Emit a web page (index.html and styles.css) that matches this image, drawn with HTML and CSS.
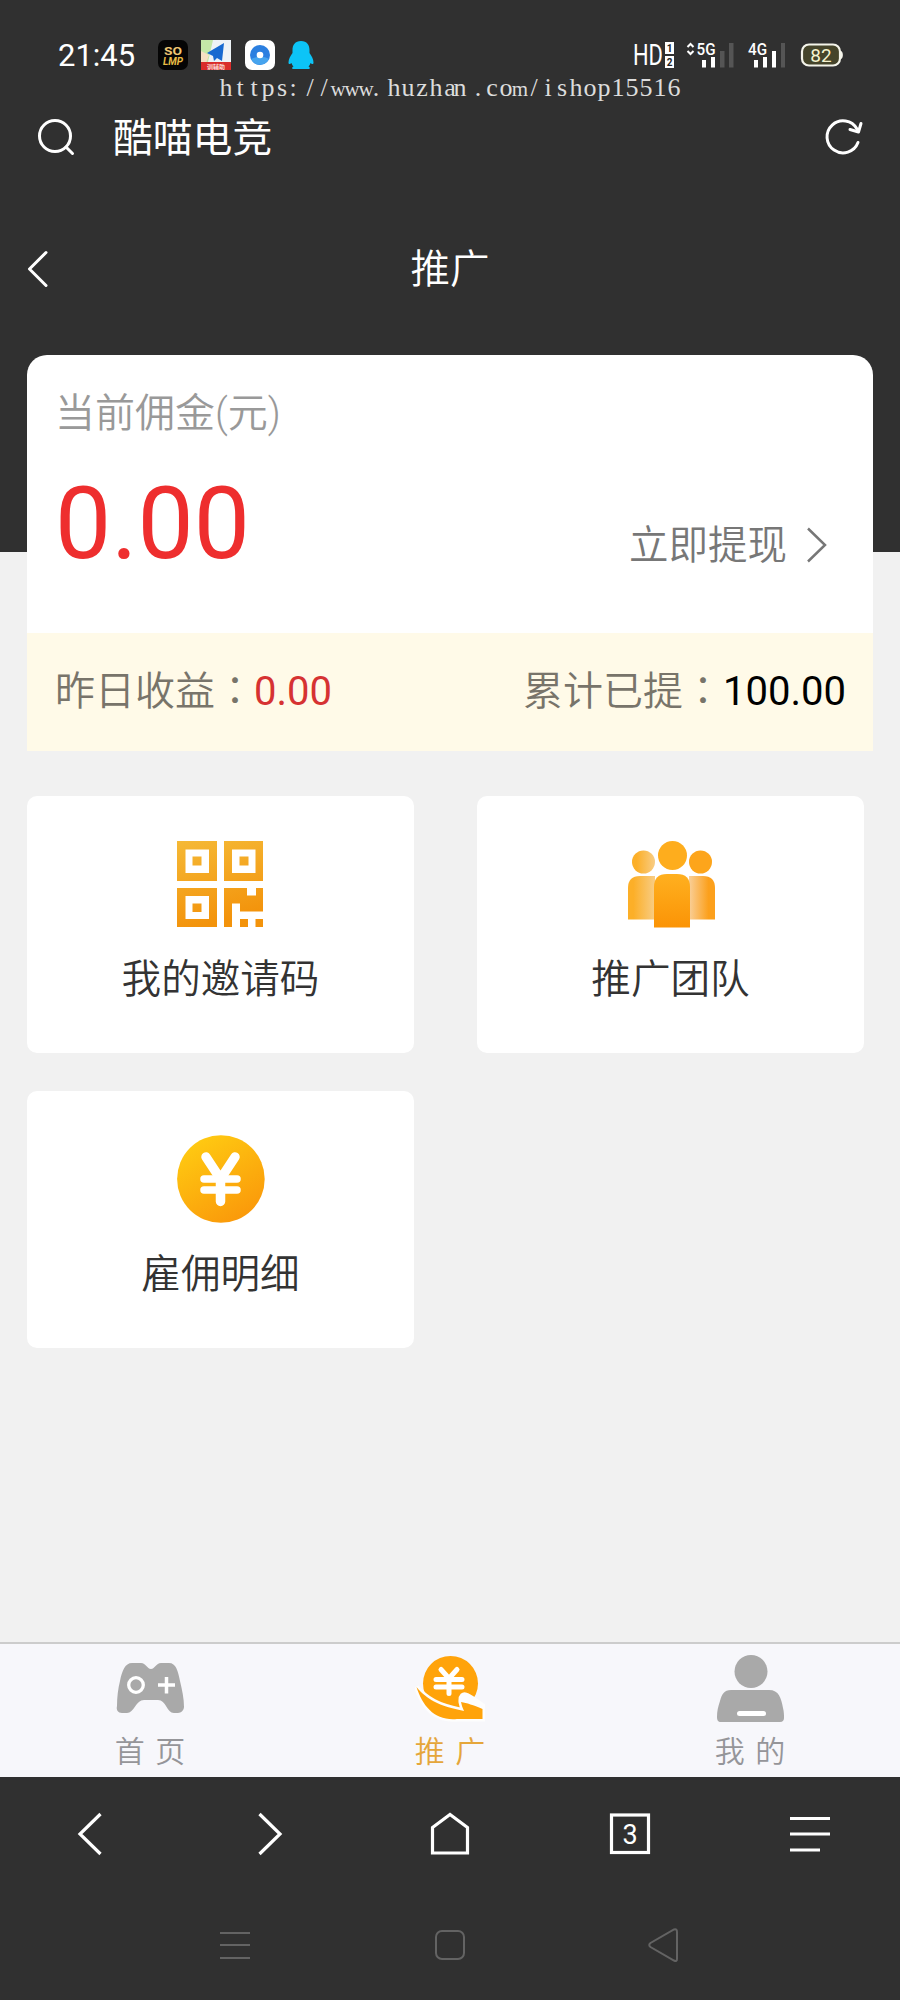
FILE: index.html
```html
<!DOCTYPE html>
<html lang="zh-CN">
<head>
<meta charset="utf-8">
<title>推广</title>
<link rel="stylesheet" href="styles.css">
</head>
<body>
<div class="phone">
  <header class="top">
    <div class="status">
      <span class="clock">21:45</span>
      <div class="apps">
        <svg class="app" width="30" height="30" viewBox="0 0 30 30">
          <rect width="30" height="30" rx="7" fill="#050505"/>
          <text x="15" y="15" class="app-word" textLength="18" lengthAdjust="spacingAndGlyphs" fill="#f0c774">SO</text>
          <text x="15" y="24.500" class="app-word app-word-slant" textLength="20" lengthAdjust="spacingAndGlyphs" fill="#e9bd45">LMP</text>
        </svg>
        <svg class="app" width="30" height="30" viewBox="0 0 30 30">
          <rect width="30" height="30" fill="#eef3f6"/>
          <path d="M0 0h12L7 22H0z" fill="#c4e8a8"/>
          <path d="M0 11l8 4-3 8H0z" fill="#f5dfc4"/>
          <path d="M23 3L6 13l6 3 1 5 3-3 5 3z" fill="#1769d0"/>
          <rect y="22" width="30" height="8" fill="#d92d2b"/>
          <text x="15" y="28.500" class="app-tag">训辅助</text>
        </svg>
        <svg class="app" width="30" height="30" viewBox="0 0 30 30">
          <rect width="30" height="30" rx="7" fill="#fff"/>
          <circle cx="15" cy="15" r="10" fill="#2b7fe0"/>
          <path d="M6 19a10 10 0 0 0 18 0c-5-3-12-3-18 0z" fill="#46a4ee"/>
          <circle cx="15" cy="15" r="3.300" fill="#fff"/>
        </svg>
        <svg class="app" width="26" height="30" viewBox="0 0 26 30">
          <path d="M13 1C7 1 4.500 5 4.500 10v3C2.500 16 .5 19 .5 22.500c0 2 1.500 2 3 .5.500 1.500 1 2.500 2 3.500-1.500.500-2 2.500 0 2.500h15c2 0 1.500-2 0-2.500 1-1 1.500-2 2-3.500 1.500 1.500 3 1.500 3-.5 0-3.500-2-6.500-4-9.500v-3C21.500 5 19 1 13 1z" fill="#0cc4f7"/>
        </svg>
      </div>
      <svg class="signals" width="220" height="36" viewBox="625 37 220 36">
        <text x="633" y="65" class="hd" textLength="30" lengthAdjust="spacingAndGlyphs">HD</text>
        <rect x="665" y="42" width="9" height="12" fill="#fff"/>
        <rect x="665" y="56" width="9" height="12" fill="#fff"/>
        <text x="669.500" y="52" class="sim">1</text>
        <text x="669.500" y="66" class="sim">2</text>
        <path d="M687.500 47l3-3 3 3M687.500 51l3 3 3-3" fill="none" stroke="#fff" stroke-width="2"/>
        <text x="696.500" y="55" class="net" textLength="19" lengthAdjust="spacingAndGlyphs">5G</text>
        <path d="M702 60h4v7.500h-4zM711 57h4v10.500h-4z" fill="#fff"/>
        <path d="M720 51h4.500v16.500H720zM729 43h4.500v24.500H729z" fill="#555"/>
        <text x="748" y="55" class="net" textLength="19" lengthAdjust="spacingAndGlyphs">4G</text>
        <path d="M754 60h4v7.500h-4zM763 57h4v10.500h-4zM772 51h4v16.500h-4z" fill="#fff"/>
        <path d="M781 43h4v24.500h-4z" fill="#555"/>
        <rect x="802" y="44.500" width="38" height="21" rx="7" fill="#45442a" stroke="#f4f4ea" stroke-width="2.200"/>
        <path d="M841 51c2.500 1 2.500 7 0 8z" fill="#f4f4ea"/>
        <text x="821" y="61.500" class="battery">82</text>
      </svg>
    </div>
    <svg class="watermark" width="464" height="28" viewBox="0 0 464 28">
      <text y="22" x="7 21 35 49 63 74 91 105 119 133 147 157 175 189 203 217 231 241 259 273 287 301 315 329 343 357 371 385 399 413 427 441 455">https://<tspan class="wide">www</tspan>.huzhan.co<tspan class="wide">m</tspan>/ishop15516</text>
    </svg>
    <div class="address">
      <svg class="search" width="40" height="40" viewBox="0 0 40 40"><circle cx="19" cy="19" r="15.500"/><path d="M30 30l6.500 6.500"/></svg>
      <span class="site">酷喵电竞</span>
      <svg class="refresh" width="40" height="40" viewBox="0 0 40 40"><path d="M34 25.500A16 16 0 1 1 33 12"/><path d="M26 12.500l8.500 2.500 2.500-8.500"/></svg>
    </div>
    <div class="titlebar">
      <svg class="back" width="24" height="40" viewBox="0 0 24 40"><path d="M21 3.500L4.500 20 21 36.500"/></svg>
      <h1 class="title">推广</h1>
    </div>
  </header>

  <main class="content">
    <section class="wallet">
      <div class="wallet-main">
        <div class="caption">当前佣金(元)</div>
        <div class="balance">
          <span class="amount">0.00</span>
          <a class="withdraw"><span>立即提现</span><svg width="24" height="40" viewBox="0 0 24 40"><path d="M3 3.500L20 20 3 36.500"/></svg></a>
        </div>
      </div>
      <div class="wallet-sub">
        <div>昨日收益<span class="colon" lang="zh-TW">：</span><b class="red">0.00</b></div>
        <div>累计已提<span class="colon" lang="zh-TW">：</span><b class="black">100.00</b></div>
      </div>
    </section>

    <section class="grid">
      <a class="tile">
        <svg width="88" height="88" viewBox="0 0 88 88">
          <defs><linearGradient id="qr" x1="0" y1="0" x2=".25" y2="1"><stop offset="0" stop-color="#f5b936"/><stop offset="1" stop-color="#f3930b"/></linearGradient></defs>
          <path fill="url(#qr)" fill-rule="evenodd" d="M0 1h40v40H0zM8.500 9.500v23.500h23.500V9.500zM15.500 16.500h9v9h-9zM47 1h39v40H47zM55 9.500v23.500h23.500V9.500zM62.500 16.500h9v9h-9zM0 48h40v39H0zM8.500 56v23h23.500V56zM15.500 63.500h9v8.500h-9zM47 48h23v7.500h9V48h7v23.500H63v-8h-8V87h-8zM63 79h8v8h-8zM78.500 79H86v8h-7.500z"/>
        </svg>
        <span>我的邀请码</span>
      </a>
      <a class="tile">
        <svg width="88" height="88" viewBox="0 0 88 88">
          <defs>
            <linearGradient id="mid" x1="0" y1="0" x2="0" y2="1"><stop offset="0" stop-color="#ffb01f"/><stop offset="1" stop-color="#fb9406"/></linearGradient>
            <linearGradient id="left" x1="0" y1="0" x2="1" y2="0"><stop offset=".2" stop-color="#fcaf28"/><stop offset="1" stop-color="#f8cd85"/></linearGradient>
            <linearGradient id="right" x1="1" y1="0" x2="0" y2="0"><stop offset=".25" stop-color="#fca01c"/><stop offset="1" stop-color="#f9cf98"/></linearGradient>
          </defs>
          <circle cx="16.500" cy="22" r="11.500" fill="url(#left)"/>
          <circle cx="73.500" cy="22" r="11.500" fill="#fda51b"/>
          <path d="M1 79.500V48q0-12 12-12h15v43.500z" fill="url(#left)"/>
          <path d="M88 79.500V48q0-12-12-12H62v43.500z" fill="url(#right)"/>
          <circle cx="45.500" cy="15.500" r="14.500" fill="#fead1d"/>
          <path d="M27 87.500V47q0-13 13-13h10q13 0 13 13v40.500z" fill="url(#mid)"/>
        </svg>
        <span>推广团队</span>
      </a>
      <a class="tile">
        <svg width="88" height="88" viewBox="0 0 88 88">
          <defs><linearGradient id="coin" x1=".2" y1="0" x2=".8" y2="1"><stop offset="0" stop-color="#ffcc12"/><stop offset="1" stop-color="#fa960a"/></linearGradient></defs>
          <circle cx="43.900" cy="44" r="43.800" fill="url(#coin)"/>
          <path d="M29 22l14.500 22L58 22M43.500 42v24.500" fill="none" stroke="#fff" stroke-width="9.500" stroke-linecap="round" stroke-linejoin="round"/>
          <path d="M27 44h33M27 55h33" fill="none" stroke="#fff" stroke-width="7.500" stroke-linecap="round"/>
        </svg>
        <span>雇佣明细</span>
      </a>
    </section>
  </main>

  <nav class="tabs">
    <a class="tab">
      <svg width="70" height="70" viewBox="0 0 70 70">
        <path d="M17 8h9c5 0 6 6 10 6s5-6 10-6h8c7 0 9 8 11 18 2 9 4 17 4 26 0 3-3 6-6 6h-4c-7 0-8-13-16-13H29c-8 0-10 13-17 13H7c-4 0-6-3-5-7 0-9 1-17 3-25C7 16 10 8 17 8z" fill="#a9a9a9"/>
        <circle cx="21" cy="30" r="7.300" fill="none" stroke="#fff" stroke-width="3.300"/>
        <path d="M51.500 22v16.500M43 30h17" stroke="#fff" stroke-width="3.500"/>
      </svg>
      <span>首 页</span>
    </a>
    <a class="tab active">
      <svg width="70" height="70" viewBox="0 0 70 70">
        <circle cx="35.500" cy="28.500" r="27.500" fill="#ffa30a"/>
        <path class="hand-gap" d="M1.500 32C7 39 13 43 19 46.500c8 4.500 18 7 30 9.500-1.500-3-2.500-6-3-9-.5-6 2-9 7-6 5 2.500 9 6 14.500 9.500V64H42C20 66 8 52 1.500 32z"/>
        <path class="hand" d="M1.500 32C7 39 13 43 19 46.500c8 4.500 18 7 30 9.500-1.500-3-2.500-6-3-9 6 1 12 3 21.500 7V64H42C20 66 8 52 1.500 32z"/>
        <path d="M26 14.500l8 9 8-9M34 23v15.500M21 24.500h26M21 32h26" fill="none" stroke="#fff" stroke-width="5" stroke-linecap="round"/>
      </svg>
      <span>推 广</span>
    </a>
    <a class="tab">
      <svg width="70" height="70" viewBox="0 0 70 70">
        <circle cx="36" cy="16.500" r="16.500" fill="#a9a9a9"/>
        <path d="M16 35h38c10 0 12 8 14 18 1 4 1 7 1 10 0 2-1 4-4 4H6c-3 0-4-2-4-5 0-6 1-10 3-16 2-7 4-11 11-11z" fill="#a9a9a9"/>
        <path d="M24.500 58.500h24" stroke="#fff" stroke-width="5" stroke-linecap="round"/>
      </svg>
      <span>我 的</span>
    </a>
  </nav>

  <footer class="bottom">
    <div class="browser-bar">
      <svg width="44" height="44" viewBox="0 0 44 44"><path d="M32.500 2L12 22l20.500 20"/></svg>
      <svg width="44" height="44" viewBox="0 0 44 44"><path d="M11.500 2L32 22 11.500 42"/></svg>
      <svg width="44" height="44" viewBox="0 0 44 44"><path d="M4.500 41V15.500L22 2.500 39.500 15.500V41z"/></svg>
      <svg width="44" height="44" viewBox="0 0 44 44"><rect x="3.500" y="3" width="37" height="37.500"/><text x="22" y="31.500" class="count">3</text></svg>
      <svg width="44" height="44" viewBox="0 0 44 44"><path d="M2 6.500h40M2 22h40M2 38h30"/></svg>
    </div>
    <div class="system-bar">
      <svg width="34" height="34" viewBox="0 0 34 34"><path d="M2 5h30M2 17h30M2 30h30"/></svg>
      <svg width="34" height="34" viewBox="0 0 34 34"><rect x="3" y="3" width="28" height="28" rx="6"/></svg>
      <svg width="34" height="34" viewBox="0 0 34 34"><path d="M31 4v27q0 3-3 1.500L4.500 19q-2.500-2 0-4L28 1.500q3-1 3 2.500z"/></svg>
    </div>
  </footer>
</div>
</body>
</html>
```

FILE: styles.css
```css
* { box-sizing: border-box; }

body {
  margin: 0;
  background: #f1f1f1;
  font-family: Roboto, "Noto Sans CJK SC", sans-serif;
}

svg { display: block; flex: none; }

.phone {
  width: 900px;
  height: 2000px;
  display: flex;
  flex-direction: column;
  overflow: hidden;
}

/* Dark header */
.top {
  height: 552px;
  flex: none;
  background: #303030;
  color: #fff;
}

.status {
  display: flex;
  align-items: center;
  height: 70px;
  padding: 40px 55px 0 58px;
}

.clock {
  width: 100px;
  padding-top: 1px;
  font-size: 31px;
  line-height: 30px;
}

.apps { display: flex; gap: 13.3px; }
.signals { margin-left: auto; }

.app-word { font: 700 11px Roboto, sans-serif; text-anchor: middle; }
.app-word-slant { font-style: italic; }
.app-tag { font: 700 6px "Noto Sans CJK SC", sans-serif; text-anchor: middle; fill: #fbd9d4; }
.hd { font: 400 29px Roboto, sans-serif; fill: #fff; }
.sim { font: 700 10px Roboto, sans-serif; text-anchor: middle; fill: #222; }
.net { font: 500 17px Roboto, sans-serif; fill: #fff; }
.battery { font: 400 19px Roboto, sans-serif; text-anchor: middle; fill: #f5f3cf; }

.watermark {
  margin: 4px 0 0 219px;
  font: 26px "Liberation Serif", serif;
  text-anchor: middle;
  fill: #dcdcdc;
}
.watermark .wide { font-size: 21px; }

.address {
  display: flex;
  align-items: center;
  height: 70px;
  padding: 0 36px;
}
.address svg, .titlebar svg {
  fill: none;
  stroke: #fff;
  stroke-width: 3;
  stroke-linecap: round;
  stroke-linejoin: round;
}
.site {
  margin-left: 37px;
  padding-top: 4px;
  font-size: 39.8px;
  line-height: 60px;
}
.refresh { margin-left: auto; }

.titlebar {
  display: grid;
  grid-template-columns: 60px 1fr 60px;
  align-items: center;
  height: 80px;
  margin-top: 57px;
  padding: 0 25px;
}
.title {
  margin: 0;
  padding-top: 2px;
  font-size: 39.5px;
  line-height: 60px;
  font-weight: 350;
  text-align: center;
}

/* Page body */
.content {
  flex: 1;
  padding: 0 27px;
  margin-top: -197px;
}

.wallet {
  height: 396px;
  overflow: hidden;
  background: #fff;
  border-radius: 20px 20px 0 0;
  font-weight: 350;
}
.wallet-main {
  height: 278px;
  padding: 29px 44px 0 28px;
}
.caption {
  font-size: 40px;
  line-height: 60px;
  color: #999;
}
.balance {
  display: flex;
  justify-content: space-between;
  align-items: flex-start;
}
.amount {
  margin-top: 25px;
  font-size: 100px;
  line-height: 110px;
  font-weight: 400;
  color: #ee2e2e;
}
.withdraw {
  display: flex;
  align-items: center;
  gap: 18px;
  margin-top: 69px;
  font-size: 39.5px;
  line-height: 60px;
  color: #777;
}
.withdraw span { padding-top: 3px; }
.withdraw svg { fill: none; stroke: #777; stroke-width: 2.5; }

.wallet-sub {
  display: flex;
  justify-content: space-between;
  align-items: center;
  height: 118px;
  padding: 0 27px 1px 28px;
  background: #fffae8;
  font-size: 40px;
  line-height: 60px;
  color: #78746a;
}
.colon { font-family: "Noto Sans CJK TC", sans-serif; line-height: 1; }
.wallet-sub b { font-weight: 400; }
.red { margin-left: -1px; color: #d63232; }
.black { color: #000; }

.grid {
  display: grid;
  grid-template-columns: 387px 387px;
  grid-auto-rows: 257px;
  gap: 38px 63px;
  margin-top: 45px;
}
.tile {
  display: flex;
  flex-direction: column;
  align-items: center;
  padding-top: 44px;
  border-radius: 10px;
  background: #fff;
  color: #333;
  font-size: 39.6px;
  line-height: 60px;
  font-weight: 350;
}
.tile span { margin-top: 22px; }

/* App tab bar */
.tabs {
  display: grid;
  grid-template-columns: repeat(3, 1fr);
  height: 135px;
  flex: none;
  border-top: 2px solid #ccc;
  background: #f7f7fb;
}
.tab {
  display: flex;
  flex-direction: column;
  align-items: center;
  padding-top: 11px;
  color: #959599;
  font-size: 30px;
  line-height: 40px;
  font-weight: 350;
  word-spacing: 3px;
}
.tab span { margin-top: 7px; }
.active { color: #e5a63a; }
.hand { fill: #ffa30a; }
.hand-gap { fill: #fdfdfd; stroke: #fdfdfd; stroke-width: 5; }

/* Browser and system navigation */
.bottom {
  height: 223px;
  flex: none;
  background: #303030;
}
.bottom svg { fill: none; stroke: #fff; stroke-width: 3.2; }
.browser-bar {
  display: grid;
  grid-template-columns: repeat(5, 1fr);
  justify-items: center;
  align-items: center;
  height: 113px;
}
.bottom .count {
  font: 400 27px Roboto, sans-serif;
  text-anchor: middle;
  fill: #fff;
  stroke: none;
}
.system-bar {
  display: flex;
  justify-content: space-between;
  align-items: center;
  height: 110px;
  padding: 0 220px 0 218px;
}
.system-bar svg:nth-child(2) { margin-left: 1px; }
.bottom .system-bar svg { stroke: #636363; stroke-width: 2; }
```
